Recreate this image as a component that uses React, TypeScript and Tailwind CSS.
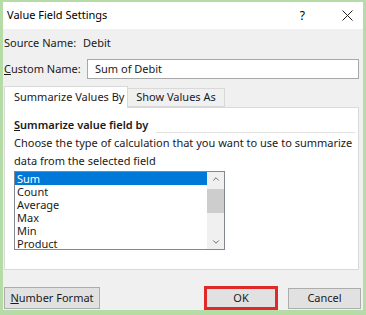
import { ChevronUp, ChevronDown } from 'lucide-react'

const items = ['Sum', 'Count', 'Average', 'Max', 'Min', 'Product']

export default function App() {
  return (
    <div
      className="w-[366px] h-[315px] bg-[#b5dba6] pt-[2px] pl-[3px] pr-[3px] pb-[5px] text-[11px] text-[#1a1a1a] whitespace-nowrap"
      style={{ fontFamily: '"Noto Sans", "Liberation Sans", sans-serif' }}
    >
      <div className="w-full h-full bg-[#f0f0f0] flex flex-col">
        {/* Title bar */}
        <div className="h-[27px] bg-white flex items-center pl-[4px] shrink-0">
          <span className="text-[11px] text-black">Value Field Settings</span>
          <div className="ml-auto flex items-center">
            <span className="text-[12px] text-black mr-[37px]">?</span>
            <svg width="11" height="11" viewBox="0 0 11 11" className="mr-[10px]">
              <path d="M0.5 0.5 L10.5 10.5 M10.5 0.5 L0.5 10.5" stroke="#222" strokeWidth="1" />
            </svg>
          </div>
        </div>

        {/* Source name */}
        <div className="mt-[6px] h-[16px] leading-[16px] flex pl-[1px]">
          <span className="w-[79px]">Source Name:</span>
          <span>Debit</span>
        </div>

        {/* Custom name */}
        <div className="mt-[8px] h-[20px] flex items-center pl-[1px] pr-[4px]">
          <span className="w-[83px]">
            <span className="underline">C</span>ustom Name:
          </span>
          <div className="flex-1 h-[20px] bg-white border border-[#a8a8a8] flex items-center pl-[7px]">
            Sum of Debit
          </div>
        </div>

        {/* Tabs */}
        <div className="mt-[7px] ml-[1px] flex items-end h-[21px] relative z-10">
          <div className="h-[22px] w-[124px] bg-white border border-[#d9d9d9] border-b-0 flex items-center pl-[9px] -mb-[1px]">
            Summarize Values By
          </div>
          <div className="h-[19px] w-[97px] bg-[#f0f0f0] border border-[#d9d9d9] border-l-0 flex items-center justify-center">
            Show Values As
          </div>
        </div>

        {/* Panel */}
        <div className="ml-[1px] mr-[4px] h-[163px] bg-white border border-[#d9d9d9] pl-[9px] pr-[3px]">
          <div className="mt-[7px] h-[18px] flex items-end">
            <span className="font-semibold leading-[17px] text-[#1a1a1a]">
              <span className="underline">S</span>ummarize value field by
            </span>
            <div className="flex-1 border-b border-[#e3e3e3] ml-[8px]" />
          </div>
          <div className="mt-[1px] leading-[18px]">
            <div>Choose the type of calculation that you want to use to summarize</div>
            <div>data from the selected field</div>
          </div>
          <div className="mt-[1px] w-[211px] h-[79px] border border-[#828790] flex">
            <div className="flex-1 flex flex-col">
              {items.map((it, i) => (
                <div
                  key={it}
                  className={
                    i === 0
                      ? 'h-[13px] leading-[13px] pl-[2px] bg-[#0078d7] text-white'
                      : 'h-[13px] leading-[13px] pl-[2px]'
                  }
                >
                  {it}
                </div>
              ))}
            </div>
            <div className="w-[17px] bg-[#f0f0f0] flex flex-col items-center">
              <div className="h-[14px] flex items-center justify-center">
                <ChevronUp size={10} strokeWidth={2.2} color="#606060" />
              </div>
              <div className="mt-[3px] w-[17px] h-[24px] bg-[#cdcdcd]" />
              <div className="mt-auto h-[14px] flex items-center justify-center">
                <ChevronDown size={10} strokeWidth={2.2} color="#606060" />
              </div>
            </div>
          </div>
        </div>

        {/* Buttons */}
        <div className="mt-auto flex items-center h-[24px] pl-[1px]">
          <button className="w-[96px] h-[22px] bg-[#e1e1e1] border border-[#adadad] flex items-center justify-center">
            <span className="underline">N</span>umber Format
          </button>
          <div className="ml-[104px] w-[74px] h-[24px] border-[3px] border-[#e02a2a] bg-[#e1e1e1] flex items-center justify-center">
            OK
          </div>
          <button className="ml-[10px] w-[73px] h-[21px] bg-[#e1e1e1] border border-[#adadad] flex items-center justify-center">
            Cancel
          </button>
        </div>
      </div>
    </div>
  )
}
